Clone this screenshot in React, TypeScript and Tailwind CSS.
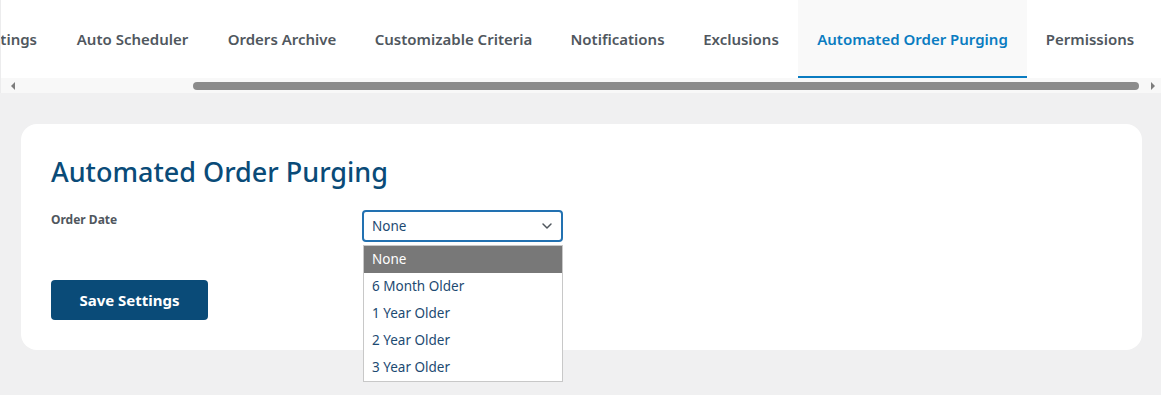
import { ChevronDown } from "lucide-react";

const tabs = [
  { label: "Settings", w: "w-[110px] -ml-[54px]", align: "justify-end pr-5" },
  { label: "Auto Scheduler", w: "w-[151px]", align: "justify-center" },
  { label: "Orders Archive", w: "w-[148px]", align: "justify-center" },
  { label: "Customizable Criteria", w: "w-[195px]", align: "justify-center" },
  { label: "Notifications", w: "w-[133px]", align: "justify-center" },
  { label: "Exclusions", w: "w-[114px]", align: "justify-center" },
  { label: "Automated Order Purging", w: "w-[229px]", align: "justify-center", active: true },
  { label: "Permissions", w: "w-[126px]", align: "justify-center" },
];

const options = ["None", "6 Month Older", "1 Year Older", "2 Year Older", "3 Year Older"];

const App = () => {
  return (
    <div className="min-h-[395px] bg-[#f0f0f1] font-['Noto_Sans',sans-serif]">
      {/* Tab strip with horizontal scroller */}
      <div className="border-l border-[#ececed] bg-white">
        <div className="flex h-[78px] overflow-hidden">
          {tabs.map((t) => (
            <div
              key={t.label}
              className={`flex shrink-0 items-center ${t.w} ${t.align} ${
                t.active
                  ? "bg-[#f9f9f9] border-b-2 border-[#0a7cc1] text-[#0a7cc1] pt-[2px]"
                  : "text-[#50575e]"
              } text-[15px] font-semibold whitespace-nowrap`}
            >
              {t.label}
            </div>
          ))}
        </div>
        <div className="flex h-[15px] items-center bg-[#f8f8f8]">
          <div className="flex w-[15px] justify-center pl-[9px]">
            <div className="h-0 w-0 border-y-[4px] border-r-[4px] border-y-transparent border-r-[#7d7d7d]" />
          </div>
          <div className="ml-[177px] h-[8px] w-[946px] rounded-full bg-[#8b8b8b]" />
          <div className="ml-[6px] flex w-[15px] justify-center">
            <div className="h-0 w-0 border-y-[4px] border-l-[4px] border-y-transparent border-l-[#7d7d7d]" />
          </div>
        </div>
      </div>

      {/* Content */}
      <div className="px-[21px] pt-[31px] pb-[45px] pr-[19px]">
        <div className="rounded-2xl bg-white px-[30px] pt-[28px] pb-[30px]">
          <h1 className="text-[27px] font-medium leading-[40px] text-[#0a4b78]">
            Automated Order Purging
          </h1>
          <div className="mt-[18px] flex">
            <label className="w-[311px] pt-[1px] text-[12px] font-bold text-[#50575e]">Order Date</label>
            <div className="relative">
              <div className="flex h-[32px] w-[201px] items-center justify-between rounded-[4px] border-2 border-[#2271b1] pl-[8px] pr-[6px] text-[13.5px] text-[#1d4a72]">
                <span>None</span>
                <ChevronDown className="h-4 w-4 text-[#50575e]" strokeWidth={2.2} />
              </div>
              <ul className="absolute left-[1px] top-[35px] z-10 w-[200px] border border-[#c8c8c8] bg-white">
                {options.map((o, i) => (
                  <li
                    key={o}
                    className={`flex h-[27px] items-center px-[8px] text-[13.5px] ${
                      i === 0 ? "bg-[#787878] text-white" : "text-[#1d4a72]"
                    }`}
                  >
                    {o}
                  </li>
                ))}
              </ul>
            </div>
          </div>
          <button className="mt-[38px] h-[40px] w-[157px] rounded-[4px] bg-[#0a4b78] text-[15px] font-bold text-white">
            Save Settings
          </button>
        </div>
      </div>
    </div>
  );
};

export default App;
